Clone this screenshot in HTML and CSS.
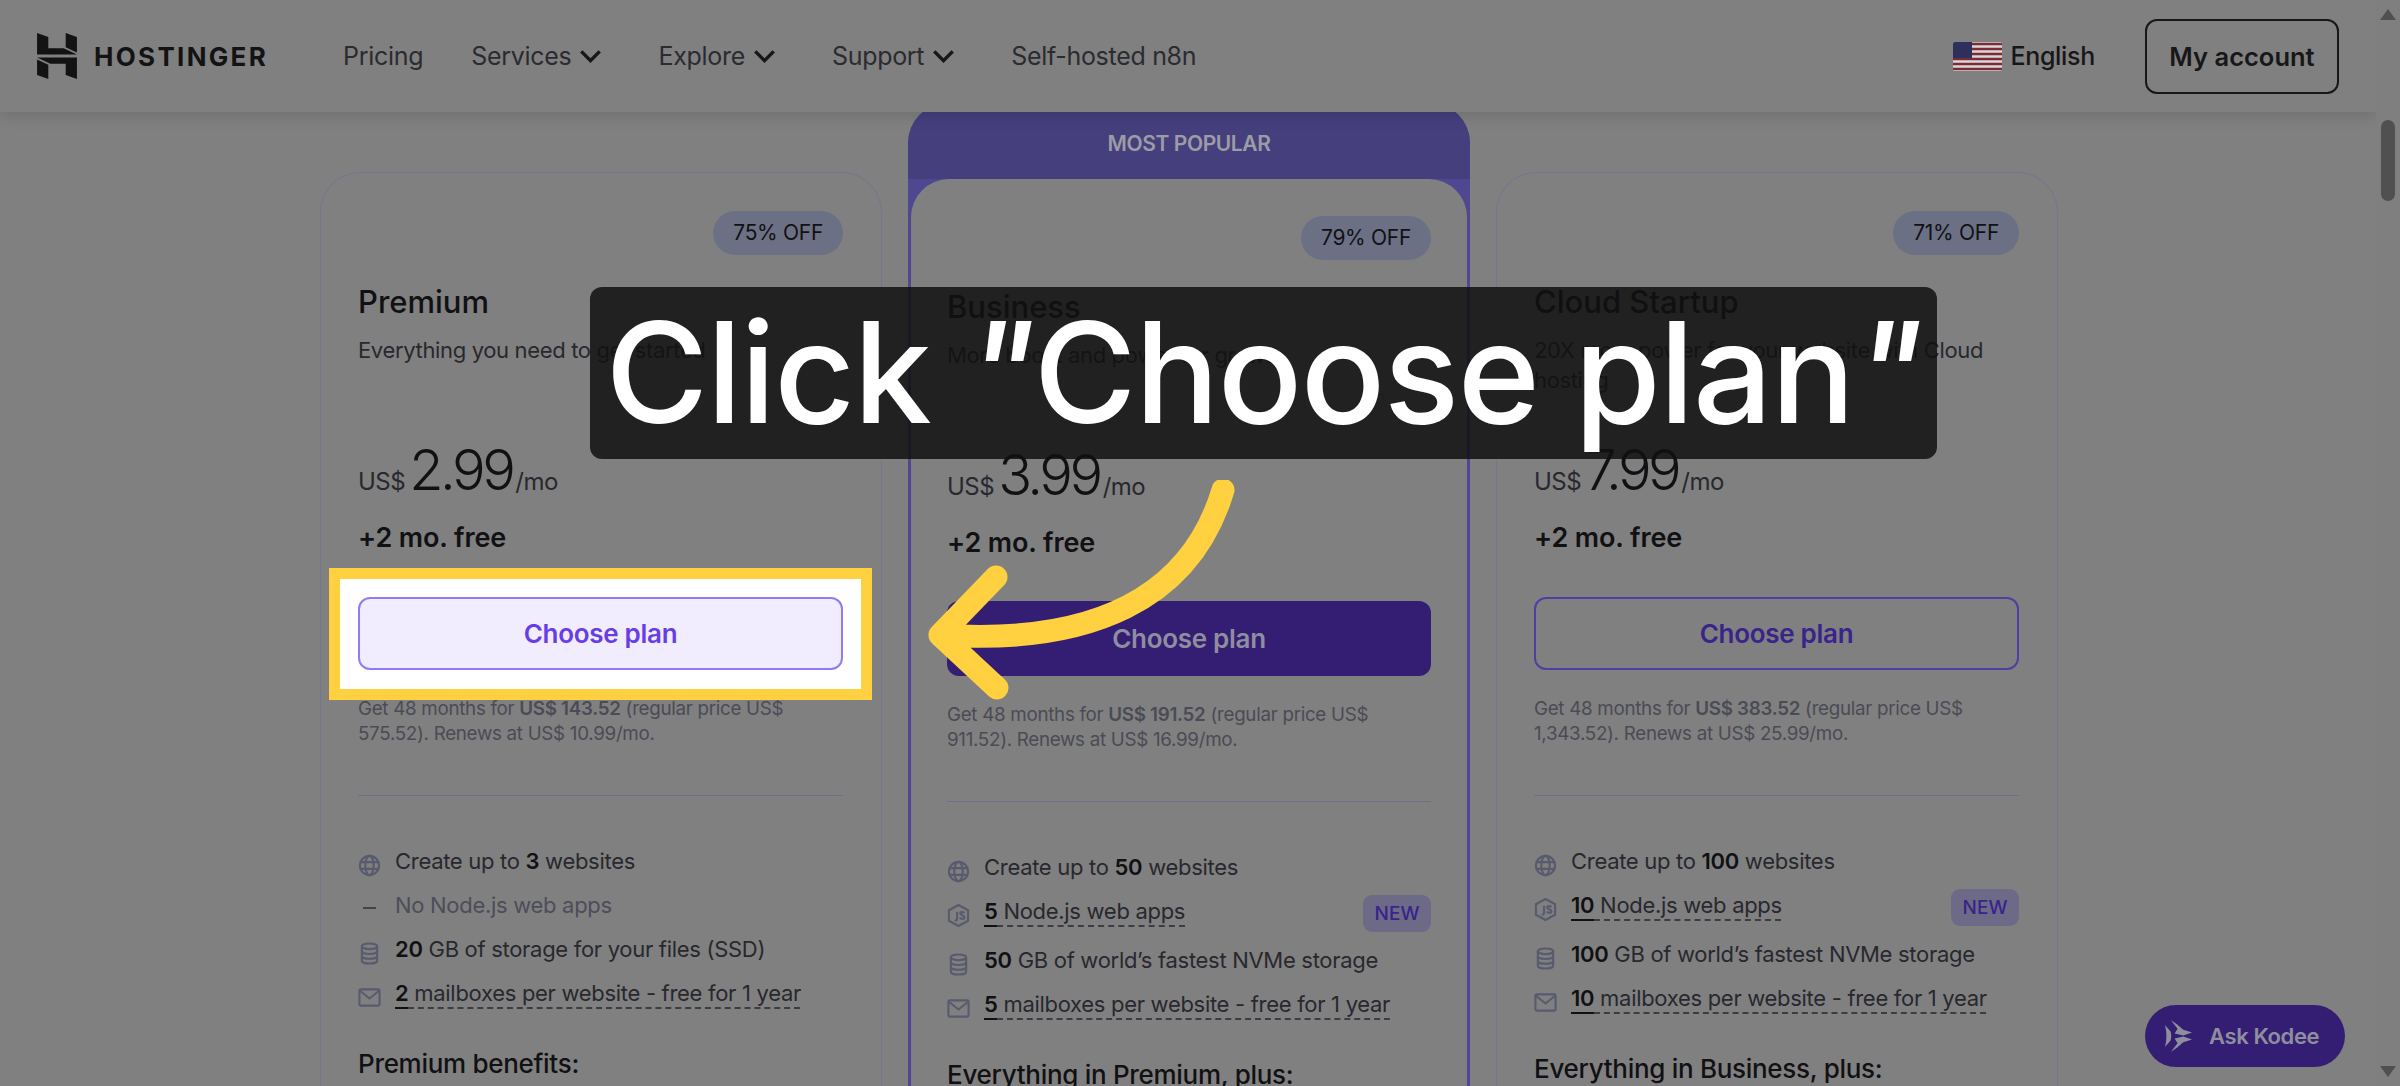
FILE: index.html
```html
<!DOCTYPE html>
<html lang="en">
<head>
    <meta charset="UTF-8">
    <meta name="viewport" content="width=device-width, initial-scale=1.0">
    <title>Hostinger - Choose plan</title>
    <link rel="stylesheet" href="styles.css">
</head>
<body>
    <svg class="icon-defs" width="0" height="0">
        <symbol id="i-globe" viewBox="0 0 24 24">
            <circle cx="12" cy="12" r="10" />
            <ellipse cx="12" cy="12" rx="4.4" ry="10" />
            <path d="M2 8.5h20M2 15.5h20" />
        </symbol>
        <symbol id="i-db" viewBox="0 0 24 24">
            <ellipse cx="12" cy="4.5" rx="8" ry="3" />
            <path d="M4 4.5v15c0 1.7 3.6 3 8 3s8-1.300 8-3v-15M4 9.500c0 1.700 3.600 3 8 3s8-1.300 8-3M4 14.500c0 1.700 3.600 3 8 3s8-1.300 8-3" />
        </symbol>
        <symbol id="i-mail" viewBox="0 0 24 24">
            <rect x="1.500" y="3.500" width="21" height="17" rx="1.500" />
            <path d="M2 5l10 8 10-8" />
        </symbol>
        <symbol id="i-node" viewBox="0 0 24 24">
            <path d="M12 1l10 5.500v11L12 23 2 17.500v-11z" />
            <path d="M10.500 8v7.500c0 1.500-1 2-2.500 1.500M18 9.500c-.8-1.300-4.300-1.600-4.300.5 0 2.300 4.500 1.400 4.500 3.800 0 2.200-3.800 2-4.800.5" />
        </symbol>
    </svg>

    <div class="window">
        <div class="page">
            <!-- Top navigation -->
            <header class="topbar">
                <a class="brand">
                    <svg class="brand-mark" viewBox="0 0 39 45">
                        <polygon points="0,0 11,4 11,15 26,15 39,21 0,21" />
                        <polygon points="28,0 39,4 39,19 28,14" />
                        <polygon points="39,45 28,41 28,30 13,30 0,24 39,24" />
                        <polygon points="11,45 0,41 0,26 11,31" />
                    </svg>
                    <span class="brand-name">HOSTINGER</span>
                </a>
                <nav class="nav">
                    <a>Pricing</a>
                    <a class="has-menu">Services <svg class="chevron" viewBox="0 0 20 12"><path d="M2 2l8 8 8-8" /></svg></a>
                    <a class="has-menu">Explore <svg class="chevron" viewBox="0 0 20 12"><path d="M2 2l8 8 8-8" /></svg></a>
                    <a class="has-menu">Support <svg class="chevron" viewBox="0 0 20 12"><path d="M2 2l8 8 8-8" /></svg></a>
                    <a>Self-hosted n8n</a>
                </nav>
                <div class="topbar-right">
                    <a class="lang">
                        <svg class="flag" viewBox="0 0 49 29">
                            <rect width="49" height="29" fill="#d8d8dc" />
                            <path d="M0 2h49M0 7h49M0 12h49M0 17h49M0 22h49M0 27h49" stroke="#7d2a33" stroke-width="2.400" />
                            <rect width="19" height="16" fill="#2f2f5c" />
                        </svg>
                        English
                    </a>
                    <a class="account">My account</a>
                </div>
            </header>

            <!-- Plans -->
            <main class="plans">
                <section class="plan">
                    <span class="off">75% OFF</span>
                    <h2>Premium</h2>
                    <p class="desc">Everything you need to get started</p>
                    <div class="price"><span class="cur">US$</span> <span class="amount">2.99</span><span class="per">/mo</span></div>
                    <div class="free">+2 mo. free</div>
                    <div class="spot"><button class="btn btn-spot">Choose plan</button></div>
                    <p class="terms">Get 48 months for <b>US$ 143.52</b> (regular price US$ 575.52). Renews at US$ 10.99/mo.</p>
                    <hr>
                    <ul class="features">
                        <li><svg class="ico"><use href="#i-globe" /></svg><span>Create up to <b>3</b> websites</span></li>
                        <li class="off-row"><span class="ico dash"></span><span>No Node.js web apps</span></li>
                        <li><svg class="ico"><use href="#i-db" /></svg><span><b>20</b> GB of storage for your files (SSD)</span></li>
                        <li><svg class="ico"><use href="#i-mail" /></svg><span class="hint"><b>2</b> mailboxes per website - free for 1 year</span></li>
                    </ul>
                    <h3>Premium benefits:</h3>
                </section>

                <section class="plan plan-top">
                    <div class="ribbon">MOST POPULAR</div>
                    <div class="plan-body">
                        <span class="off">79% OFF</span>
                        <h2>Business</h2>
                        <p class="desc">More boost and power for growth</p>
                        <div class="price"><span class="cur">US$</span> <span class="amount">3.99</span><span class="per">/mo</span></div>
                        <div class="free">+2 mo. free</div>
                        <button class="btn btn-solid">Choose plan</button>
                        <p class="terms">Get 48 months for <b>US$ 191.52</b> (regular price US$ 911.52). Renews at US$ 16.99/mo.</p>
                        <hr>
                        <ul class="features">
                            <li><svg class="ico"><use href="#i-globe" /></svg><span>Create up to <b>50</b> websites</span></li>
                            <li><svg class="ico"><use href="#i-node" /></svg><span class="hint"><b>5</b> Node.js web apps</span><span class="new">NEW</span></li>
                            <li><svg class="ico"><use href="#i-db" /></svg><span><b>50</b> GB of world’s fastest NVMe storage</span></li>
                            <li><svg class="ico"><use href="#i-mail" /></svg><span class="hint"><b>5</b> mailboxes per website - free for 1 year</span></li>
                        </ul>
                        <h3>Everything in Premium, plus:</h3>
                    </div>
                </section>

                <section class="plan">
                    <span class="off">71% OFF</span>
                    <h2>Cloud Startup</h2>
                    <p class="desc">20X more power for your website with Cloud hosting</p>
                    <div class="price"><span class="cur">US$</span> <span class="amount">7.99</span><span class="per">/mo</span></div>
                    <div class="free">+2 mo. free</div>
                    <button class="btn btn-line">Choose plan</button>
                    <p class="terms">Get 48 months for <b>US$ 383.52</b> (regular price US$ 1,343.52). Renews at US$ 25.99/mo.</p>
                    <hr>
                    <ul class="features">
                        <li><svg class="ico"><use href="#i-globe" /></svg><span>Create up to <b>100</b> websites</span></li>
                        <li><svg class="ico"><use href="#i-node" /></svg><span class="hint"><b>10</b> Node.js web apps</span><span class="new">NEW</span></li>
                        <li><svg class="ico"><use href="#i-db" /></svg><span><b>100</b> GB of world’s fastest NVMe storage</span></li>
                        <li><svg class="ico"><use href="#i-mail" /></svg><span class="hint"><b>10</b> mailboxes per website - free for 1 year</span></li>
                    </ul>
                    <h3>Everything in Business, plus:</h3>
                </section>
            </main>

            <a class="kodee">
                <svg class="kodee-mark" viewBox="0 0 30 33">
                    <path d="M7 0l6 4 7 6 9 3-9 3-9-2 3-5z" />
                    <path d="M7 33l6-4 7-6 9-3-9-3-9 2 3 5z" />
                    <path d="M1 5l6 7q1 4 0 9l-6 7q3-11.500 0-23z" />
                </svg>
                Ask Kodee
            </a>

            <!-- Tutorial callout over the page -->
            <div class="caption">Click <span class="quote">"</span>Choose plan<span class="quote">"</span></div>
            <svg class="arrow" viewBox="0 0 320 230">
                <path d="M303 10C270 120 170 165 20 155M76 97L20 155L77 208" />
            </svg>
        </div>

        <!-- Browser scrollbar -->
        <div class="scrollbar">
            <span class="arrow-up"></span>
            <span class="thumb"></span>
            <span class="arrow-down"></span>
        </div>
    </div>
</body>
</html>
```

FILE: styles.css
```css
:root {
    --page: #808080;
    --ink: #111114;
    --text: #28282e;
    --muted: #4b4b55;
    --purple: #341e73;
    --yellow: #ffd040;
    --line: #6f7086;
}

* {
    box-sizing: border-box;
}

html,
body {
    margin: 0;
    height: 100%;
    overflow: hidden;
}

body {
    font-family: Inter, "Liberation Sans", sans-serif;
    background-color: var(--page);
    color: var(--text);
}

.icon-defs {
    position: absolute;
}

.window {
    display: flex;
    height: 1086px;
}

.page {
    position: relative;
    flex: 1;
    overflow: hidden;
}

/* top bar */
.topbar {
    position: relative;
    z-index: 5;
    display: flex;
    align-items: center;
    height: 112px;
    padding: 0 37px 0 37px;
    background-color: var(--page);
    box-shadow: 0 4px 14px rgba(0, 0, 0, 0.14);
}

.brand {
    display: flex;
    align-items: center;
    gap: 17px;
}

.brand-mark {
    width: 40px;
    height: 46px;
    fill: #131313;
}

.brand-name {
    font-size: 26px;
    font-weight: 700;
    letter-spacing: 2.3px;
    color: #131313;
}

.nav {
    display: flex;
    align-items: center;
    gap: 48px;
    margin-left: 75px;
    font-size: 25px;
    letter-spacing: -0.3px;
    color: #2b2b30;
}

.nav a {
    display: flex;
    align-items: center;
    gap: 8px;
}

.nav .has-menu {
    margin-right: 8px;
}

.chevron {
    width: 23px;
    height: 14px;
    fill: none;
    stroke: #17171a;
    stroke-width: 3;
}

.topbar-right {
    display: flex;
    align-items: center;
    margin-left: auto;
}

.lang {
    display: flex;
    align-items: center;
    gap: 8px;
    font-size: 25px;
    font-weight: 500;
    letter-spacing: -0.3px;
    color: #17171a;
}

.flag {
    width: 49px;
    height: 29px;
    border-radius: 2px;
}

.account {
    width: 194px;
    margin-left: 50px;
    height: 75px;
    line-height: 71px;
    text-align: center;
    border: 2px solid #17171a;
    border-radius: 12px;
    font-size: 25.500px;
    font-weight: 600;
    letter-spacing: 0;
    color: #17171a;
}

/* plan cards */
.plans {
    display: grid;
    grid-template-columns: repeat(3, 562px);
    justify-content: center;
    align-items: start;
    gap: 26px;
    padding: 60px 0 0 2px;
}

.plan {
    position: relative;
    height: 1000px;
    padding: 38px 38px 38px 37px;
    border: 1px solid #73778c;
    border-bottom: none;
    border-radius: 40px 40px 0 0;
}

.plan-top {
    height: 1000px;
    margin-top: -69px;
    padding: 0;
    border: none;
    border-radius: 40px 40px 0 0;
    background-color: #4f478f;
}

.ribbon {
    height: 76px;
    padding-top: 28px;
    text-align: center;
    font-size: 21px;
    font-weight: 600;
    letter-spacing: -0.4px;
    color: #9c9ca4;
    background: #463f7e;
    border-radius: 40px 40px 0 0;
}

.plan-body {
    height: 924px;
    margin: 0 3px;
    padding: 37px 36px;
    border-radius: 38px 38px 0 0;
    background-color: var(--page);
}

.off {
    display: block;
    width: fit-content;
    height: 44px;
    margin-left: auto;
    padding: 0 20px;
    line-height: 44px;
    font-size: 21px;
    letter-spacing: -0.3px;
    color: var(--ink);
    background-color: #6b7085;
    border-radius: 22px;
}

.plan h2 {
    height: 36px;
    margin: 29px 0 0;
    font-size: 31px;
    line-height: 36px;
    font-weight: 500;
    letter-spacing: 0;
    color: var(--ink);
}

.desc {
    height: 60px;
    margin: 15px 0 0;
    font-size: 22px;
    line-height: 30px;
    letter-spacing: -0.35px;
    color: var(--text);
}

.price {
    display: flex;
    align-items: baseline;
    height: 60px;
    margin-top: 41px;
    color: var(--ink);
}

.cur,
.per {
    font-size: 24px;
    letter-spacing: -0.5px;
    color: var(--text);
}

.amount {
    margin-left: 4px;
    font-size: 56px;
    font-weight: 300;
    letter-spacing: -3.500px;
    color: var(--ink);
}

.per {
    margin-left: 3px;
}

.free {
    margin-top: 25px;
    font-size: 27px;
    line-height: 34px;
    font-weight: 600;
    letter-spacing: -0.1px;
    color: var(--ink);
}

.btn {
    display: block;
    width: 100%;
    height: 73px;
    margin-top: 31px;
    border-radius: 12px;
    border: 2px solid transparent;
    font-family: inherit;
    font-size: 26px;
    font-weight: 600;
    letter-spacing: -0.3px;
}

.btn-solid {
    height: 75px;
    margin-top: 41px;
    background-color: var(--purple);
    color: #8f8e9e;
}

.btn-line {
    margin-top: 42px;
    background-color: transparent;
    border-color: #4f3fa0;
    color: #3a2389;
}

/* highlighted button, white box with yellow frame around it */
.spot {
    position: relative;
    margin-top: 42px;
}

.spot::before {
    content: "";
    position: absolute;
    inset: -29px -29px -30px -29px;
    background-color: #fff;
    border: 11px solid var(--yellow);
}

.btn-spot {
    position: relative;
    margin-top: 0;
    border-color: #8f7cf5;
    background-color: #f1edff;
    color: #673de6;
}

.terms {
    margin: 26px 0 0;
    font-size: 18.800px;
    line-height: 25px;
    letter-spacing: -0.3px;
    color: var(--muted);
}

.terms b {
    font-weight: 600;
}

.plan hr {
    height: 1px;
    margin: 49px 0 0;
    border: none;
    background-color: var(--line);
}

.features {
    display: flex;
    flex-direction: column;
    gap: 12px;
    margin: 49px 0 0;
    padding: 0;
    list-style: none;
    font-size: 22px;
    line-height: 32px;
    letter-spacing: -0.3px;
}

.features li {
    display: flex;
    align-items: flex-start;
}

.features b {
    font-weight: 600;
    color: var(--ink);
}

.ico {
    flex: none;
    width: 23px;
    height: 23px;
    margin: 9px 14px 0 0;
    fill: none;
    stroke: #585a6e;
    stroke-width: 2.200;
}

.dash {
    position: relative;
}

.dash::before {
    content: "";
    position: absolute;
    left: 5px;
    top: 9px;
    width: 13px;
    height: 2px;
    background-color: #444;
}

.off-row {
    color: #4d4d5a;
}

.hint {
    text-decoration: underline dashed 2px #3c3c44;
    text-underline-offset: 6px;
    text-decoration-skip-ink: none;
}

.hint b {
    text-decoration: underline solid 2px var(--ink);
    text-underline-offset: 6px;
    text-decoration-skip-ink: none;
}

.new {
    width: 68px;
    height: 37px;
    margin-left: auto;
    line-height: 37px;
    text-align: center;
    font-size: 19px;
    font-weight: 500;
    letter-spacing: 0;
    color: #3a2389;
    background-color: #6d6a88;
    border-radius: 9px;
}

.plan h3 {
    margin: 39px 0 0;
    font-size: 26px;
    line-height: 32px;
    font-weight: 500;
    letter-spacing: -0.3px;
    color: var(--ink);
}

/* chat button */
.kodee {
    position: absolute;
    left: 2145px;
    top: 1005px;
    z-index: 4;
    display: flex;
    align-items: center;
    gap: 16px;
    width: 200px;
    height: 62px;
    padding-left: 19px;
    border-radius: 31px;
    background-color: var(--purple);
    font-size: 22px;
    font-weight: 600;
    letter-spacing: -0.4px;
    color: #8f8e9e;
}

.kodee-mark {
    width: 29px;
    height: 32px;
    fill: #8f8e9e;
}

/* tutorial callout */
.caption {
    position: absolute;
    left: 590px;
    top: 287px;
    z-index: 6;
    width: 1347px;
    height: 172px;
    border-radius: 12px;
    background-color: rgba(17, 17, 17, 0.85);
    color: #fff;
    text-align: center;
    font-size: 140px;
    line-height: 170px;
    font-weight: 500;
    letter-spacing: -1.500px;
    white-space: nowrap;
}

.quote {
    font-style: italic;
}

.arrow {
    position: absolute;
    left: 920px;
    top: 480px;
    z-index: 7;
    width: 320px;
    height: 230px;
    fill: none;
    stroke: var(--yellow);
    stroke-width: 23;
    stroke-linecap: round;
    stroke-linejoin: round;
}

/* scrollbar */
.scrollbar {
    position: relative;
    flex: none;
    width: 24px;
    background-color: #7f7f7f;
}

.arrow-up,
.arrow-down {
    position: absolute;
    left: 4px;
    width: 0;
    height: 0;
    border-left: 8px solid transparent;
    border-right: 8px solid transparent;
}

.arrow-up {
    top: 9px;
    border-bottom: 11px solid #505050;
}

.arrow-down {
    bottom: 9px;
    border-top: 11px solid #505050;
}

.thumb {
    position: absolute;
    left: 5px;
    top: 120px;
    width: 14px;
    height: 81px;
    border-radius: 7px;
    background-color: #505050;
}
```
